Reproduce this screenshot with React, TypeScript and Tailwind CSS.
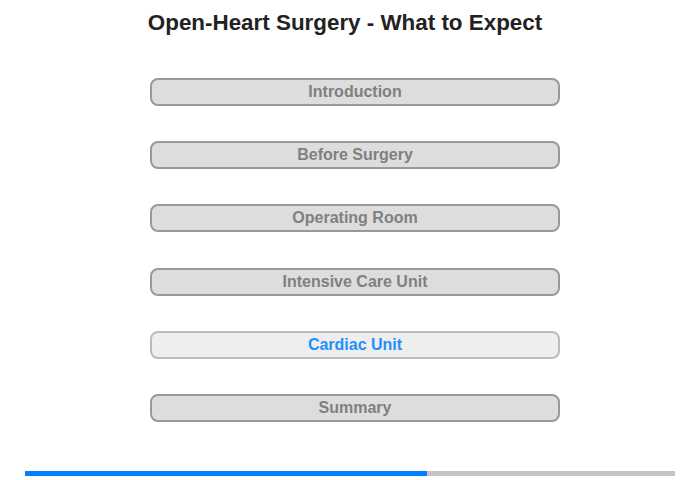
import React from "react";

const items = [
  "Introduction",
  "Before Surgery",
  "Operating Room",
  "Intensive Care Unit",
  "Cardiac Unit",
  "Summary",
];

export default function App() {
  return (
    <div
      className="w-[700px] h-[480px] bg-white relative"
      style={{ fontFamily: '"Liberation Sans", Arial, sans-serif' }}
    >
      <div className="pt-[11px] w-[690px] text-center text-[22.4px] leading-[24px] font-bold text-[#222]">
        Open-Heart Surgery - What to Expect
      </div>
      <div className="ml-[150px] w-[410px] mt-[43px] flex flex-col gap-[35.2px]">
        {items.map((t) => {
          const active = t === "Cardiac Unit";
          return (
            <div
              key={t}
              className={
                active
                  ? "h-[28px] rounded-[8px] border-2 border-[#bbbbbb] bg-[#eeeeee] text-[#1e90ff] text-[16px] font-bold flex items-center justify-center"
                  : "h-[28px] rounded-[8px] border-2 border-[#999999] bg-[#dddddd] text-[#808080] text-[16px] font-bold flex items-center justify-center"
              }
            >
              {t}
            </div>
          );
        })}
      </div>
      <div className="absolute left-[25px] top-[471px] w-[650px] h-[5px] bg-[#c4c4c4] flex">
        <div className="w-[402px] h-full bg-[#0080ff]" />
      </div>
    </div>
  );
}
